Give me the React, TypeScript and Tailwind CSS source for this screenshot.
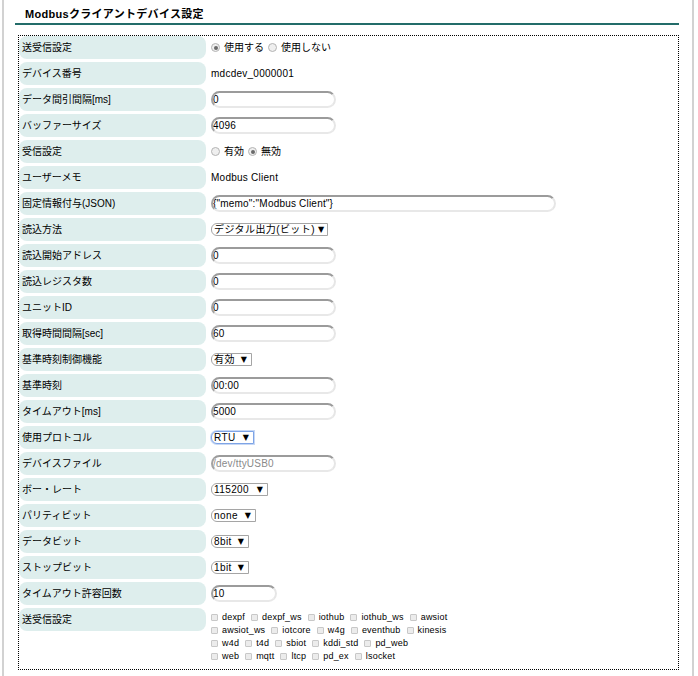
import React from 'react'

type Row =
  | { label: string; kind: 'radio'; options: string[]; selected: number }
  | { label: string; kind: 'text'; value: string }
  | { label: string; kind: 'input'; value: string; width?: string; disabled?: boolean }
  | { label: string; kind: 'select'; value: string; width: string; focused?: boolean }
  | { label: string; kind: 'checks'; lines: string[][] }

const rows: Row[] = [
  { label: '送受信設定', kind: 'radio', options: ['使用する', '使用しない'], selected: 0 },
  { label: 'デバイス番号', kind: 'text', value: 'mdcdev_0000001' },
  { label: 'データ間引間隔[ms]', kind: 'input', value: '0' },
  { label: 'バッファーサイズ', kind: 'input', value: '4096' },
  { label: '受信設定', kind: 'radio', options: ['有効', '無効'], selected: 1 },
  { label: 'ユーザーメモ', kind: 'text', value: 'Modbus Client' },
  { label: '固定情報付与(JSON)', kind: 'input', value: '{"memo":"Modbus Client"}', width: 'w-[345px]' },
  { label: '読込方法', kind: 'select', value: 'デジタル出力(ビット)', width: 'w-[117px]' },
  { label: '読込開始アドレス', kind: 'input', value: '0' },
  { label: '読込レジスタ数', kind: 'input', value: '0' },
  { label: 'ユニットID', kind: 'input', value: '0' },
  { label: '取得時間間隔[sec]', kind: 'input', value: '60' },
  { label: '基準時刻制御機能', kind: 'select', value: '有効', width: 'w-[41px]' },
  { label: '基準時刻', kind: 'input', value: '00:00' },
  { label: 'タイムアウト[ms]', kind: 'input', value: '5000' },
  { label: '使用プロトコル', kind: 'select', value: 'RTU', width: 'w-[43px]', focused: true },
  { label: 'デバイスファイル', kind: 'input', value: '/dev/ttyUSB0', disabled: true },
  { label: 'ボー・レート', kind: 'select', value: '115200', width: 'w-[57px]' },
  { label: 'パリティビット', kind: 'select', value: 'none', width: 'w-[45px]' },
  { label: 'データビット', kind: 'select', value: '8bit', width: 'w-[38px]' },
  { label: 'ストップビット', kind: 'select', value: '1bit', width: 'w-[38px]' },
  { label: 'タイムアウト許容回数', kind: 'input', value: '10', width: 'w-[66px]' },
  {
    label: '送受信設定',
    kind: 'checks',
    lines: [
      ['dexpf', 'dexpf_ws', 'iothub', 'iothub_ws', 'awsiot'],
      ['awsiot_ws', 'iotcore', 'w4g', 'eventhub', 'kinesis'],
      ['w4d', 't4d', 'sbiot', 'kddi_std', 'pd_web'],
      ['web', 'mqtt', 'ltcp', 'pd_ex', 'lsocket'],
    ],
  },
]

function Radio({ on }: { on: boolean }) {
  return (
    <span className="w-[9px] h-[9px] rounded-full border border-[#b4b4b4] bg-[#efefef] flex items-center justify-center shrink-0">
      {on && <span className="w-[4px] h-[4px] rounded-full bg-[#6a6a6a]" />}
    </span>
  )
}

function Value({ row }: { row: Row }) {
  switch (row.kind) {
    case 'radio':
      return (
        <div className="flex items-center text-[10px]">
          {row.options.map((o, i) => (
            <React.Fragment key={o}>
              <Radio on={i === row.selected} />
              <span className="ml-[4px] mr-[4px]">{o}</span>
            </React.Fragment>
          ))}
        </div>
      )
    case 'text':
      return <span className="text-[10px] tracking-[0.25px]">{row.value}</span>
    case 'input':
      return (
        <input
          readOnly
          disabled={row.disabled}
          value={row.value}
          className={`${row.width ?? 'w-[125px]'} h-[17px] rounded-full border-2 border-t-[#9b9b9b] border-l-[#a3a3a3] border-r-[#e6e6e6] border-b-[#e8e8e8] bg-white pl-0 text-[10px] tracking-[0.2px] outline-none ${row.disabled ? 'text-[#8a8a8a]' : 'text-black'}`}
        />
      )
    case 'select':
      return (
        <div
          className={`${row.width} h-[13px] flex items-center justify-between gap-[3px] rounded-l-[6px] border pl-[2px] pr-[4px] text-[10px] bg-white ${row.focused ? 'border-[#7ea4e6] shadow-[0_0_0_1px_#c7d8f5]' : 'border-[#a5a5a5]'}`}
        >
          <span className="leading-none tracking-[0.4px] whitespace-nowrap">{row.value}</span>
          <span className="text-[8px] leading-none font-['DejaVu_Sans',sans-serif]">▼</span>
        </div>
      )
    case 'checks':
      return (
        <div className="pt-[3px] text-[9px] leading-[13px] tracking-[0.2px]">
          {row.lines.map((line, li) => (
            <div key={li} className="flex items-center h-[13px]">
              {line.map((c) => (
                <span key={c} className="flex items-center mr-[6px]">
                  <span className="w-[7px] h-[7px] border border-[#c8c8c8] bg-[#ececec] rounded-[1px] mr-[4px]" />
                  {c}
                </span>
              ))}
            </div>
          ))}
        </div>
      )
  }
}

export default function App() {
  return (
    <div className="min-h-screen bg-white font-['Liberation_Sans','Noto_Sans_CJK_JP',sans-serif] text-black">
      <div className="ml-[2px] w-[692px] h-[676px] border-x-2 border-[#d2d2d2] overflow-hidden">
        <div className="ml-[11px] w-[664px]">
          {/* title */}
          <div className="pt-[7px] pb-[2px] pl-[10px] border-b-2 border-[#236c69]">
            <h1 className="text-[11px] leading-[14px] font-bold tracking-[0.3px]">Modbusクライアントデバイス設定</h1>
          </div>

          {/* form box */}
          <div className="mt-[10px] ml-[3px] w-[661px] h-[635px] border border-dotted border-black">
            {rows.map((row, i) => (
              <div key={i} className={`flex gap-[5px] ${row.kind === 'checks' ? 'items-start' : 'items-center'} mb-[3px]`}>
                <div className="w-[187px] h-[23px] shrink-0 rounded-lg bg-[#deeeed] flex items-center pl-[3px] text-[10px]">
                  {row.label}
                </div>
                <Value row={row} />
              </div>
            ))}
          </div>
        </div>
      </div>
    </div>
  )
}
